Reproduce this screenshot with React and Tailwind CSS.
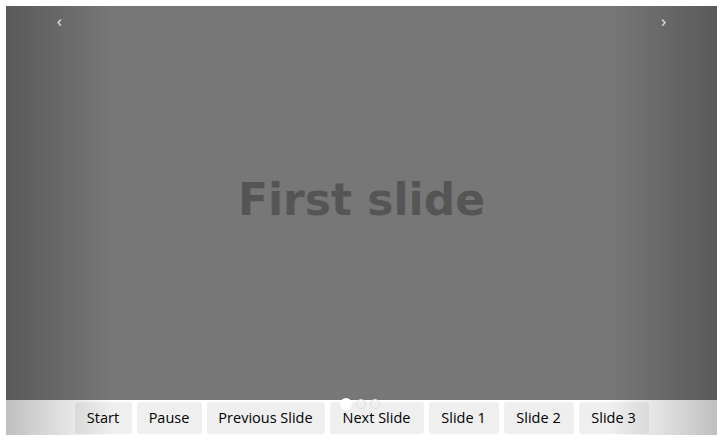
import React, { useState } from "react";

const buttons = [
  { label: "Start", w: "w-[57px]" },
  { label: "Pause", w: "w-[65px]" },
  { label: "Previous Slide", w: "w-[118px]" },
  { label: "Next Slide", w: "w-[94px]" },
  { label: "Slide 1", w: "w-[70px]" },
  { label: "Slide 2", w: "w-[70px]" },
  { label: "Slide 3", w: "w-[70px]" },
];

function App() {
  const [active, setActive] = useState(0);

  return (
    <div className="bg-white w-[723px] h-[442px] p-[6px]">
      {/* carousel */}
      <div className="relative w-[711px]">
        <div className="h-[394px] bg-[#777777] flex items-center justify-center pb-[6px]">
          <h1
            className="text-[44px] font-bold text-[#555555] leading-none"
            style={{ fontFamily: '"DejaVu Sans", Verdana, sans-serif' }}
          >
            First slide
          </h1>
        </div>

        <div
          className="h-[35px] pt-[2px] flex justify-center gap-[5px] bg-white"
          style={{ fontFamily: '"Open Sans", "Noto Sans", sans-serif' }}
        >
          {buttons.map((b, i) => (
            <button
              key={b.label}
              onClick={() => i >= 4 && setActive(i - 4)}
              className={`${b.w} h-[32px] rounded-[3px] bg-[#efefef] text-[14.5px] text-black leading-none`}
            >
              {b.label}
            </button>
          ))}
        </div>

        {/* controls */}
        <div className="absolute left-0 top-0 bottom-0 w-[15%] bg-gradient-to-r from-black/25 to-transparent flex justify-center">
          <span className="mt-[6px] text-[17px] leading-none text-white/80 h-fit">‹</span>
        </div>
        <div className="absolute right-0 top-0 bottom-0 w-[15%] bg-gradient-to-l from-black/25 to-transparent flex justify-center">
          <span className="mt-[6px] text-[17px] leading-none text-white/80 h-fit">›</span>
        </div>

        {/* indicators */}
        <div className="absolute left-0 right-0 top-[392px] flex justify-center items-center gap-[4px] h-[12px] pr-[3px]">
          {[0, 1, 2].map((i) =>
            i === active ? (
              <span key={i} className="w-[12px] h-[12px] rounded-full bg-white" />
            ) : (
              <span key={i} className="w-[10px] h-[10px] rounded-full border border-[#dcdcdc]" />
            )
          )}
        </div>
      </div>
    </div>
  );
}

export default App;
